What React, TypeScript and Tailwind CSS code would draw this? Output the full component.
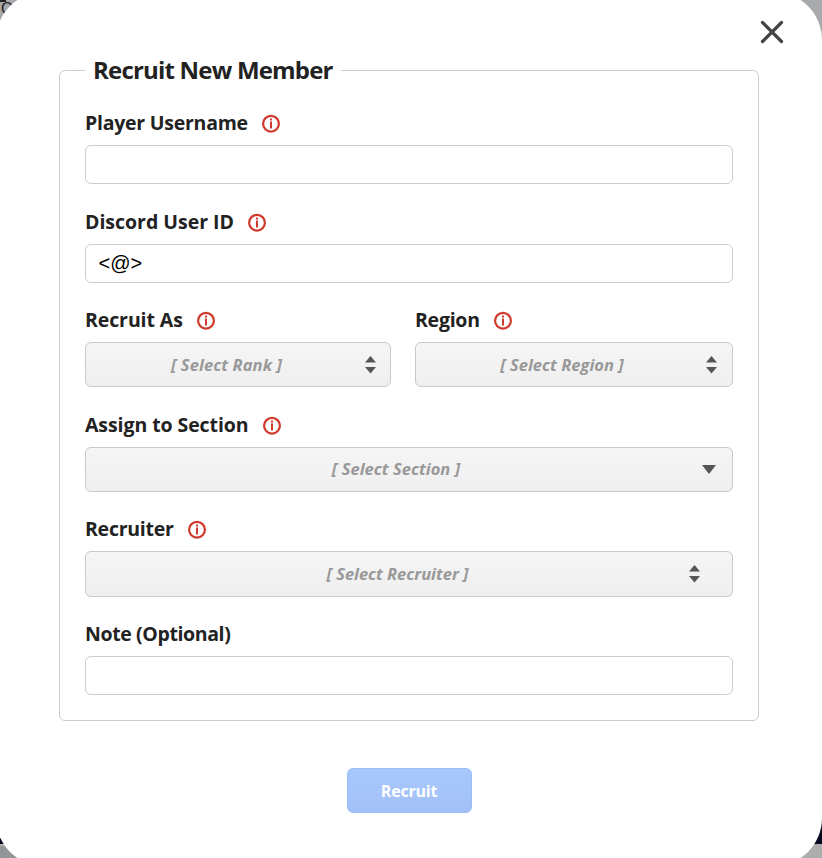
import React from "react";

const labelFont = "font-['Open_Sans',sans-serif] font-bold text-[#222]";

function InfoIcon() {
  return (
    <svg width="20" height="20" viewBox="0 0 20 20" className="ml-[13px] shrink-0" fill="none">
      <circle cx="10" cy="10.7" r="7.9" stroke="#cf3a2c" strokeWidth="2.2" />
      <path d="M10 8.5v7" stroke="#cf3a2c" strokeWidth="2" />
      <path d="M10 5.5v2" stroke="#cf3a2c" strokeWidth="2" />
    </svg>
  );
}

function Label({ text, textClass, required = true }: { text: string; textClass: string; required?: boolean }) {
  return (
    <div className="mb-2 flex h-7 items-center">
      <span className={`${labelFont} whitespace-nowrap text-[19.5px] leading-7 ${textClass}`}>{text}</span>
      {required && <InfoIcon />}
    </div>
  );
}

function TextBox({ value = "" }: { value?: string }) {
  return (
    <input
      readOnly
      value={value}
      className="block h-[39px] w-full rounded-md border border-[#ccc] bg-white px-[12.5px] font-['Liberation_Sans',Arial,sans-serif] text-[20px] text-black outline-none"
    />
  );
}

function SortArrows() {
  return (
    <svg width="12" height="18" viewBox="0 0 12 18" className="shrink-0" fill="#555">
      <path d="M5.5 0 11 6.5H0Z" />
      <path d="M0 11H11L5.5 17.5Z" />
    </svg>
  );
}

function DownArrow() {
  return (
    <svg width="14" height="9" viewBox="0 0 14 9" className="shrink-0" fill="#555">
      <path d="M0 0H14L7 9Z" />
    </svg>
  );
}

function SelectBox({ text, box, textClass, single = false }: { text: string; box: string; textClass: string; single?: boolean }) {
  return (
    <div className={`flex items-center rounded-md border border-[#c9c9c9] bg-linear-to-b from-[#f5f5f5] to-[#efefef] ${box}`}>
      <span className={`flex-1 whitespace-nowrap text-center font-['Open_Sans',sans-serif] text-[16.5px] font-bold italic leading-6 text-[#999] ${textClass}`}>
        {text}
      </span>
      {single ? <DownArrow /> : <SortArrows />}
    </div>
  );
}

export default function App() {
  return (
    <div className="relative h-[858px] w-[822px] overflow-hidden">
      <div className="flex h-full flex-col bg-[#a8a9ab]">
        <div className="h-[2px] w-[6px] bg-[#20222c]" />
        <div className="h-[18px] pl-px font-['Liberation_Sans',sans-serif] text-[16px] leading-[14px] text-[#222]">C</div>
        <div className="flex-1" />
        <div className="h-[44px] bg-[#080b20]" />
        <div className="flex h-[14px]">
          <div className="flex-1 border-t-2 border-[#b2b2b2] bg-[#949597]" />
          <div className="flex-1 bg-[#adadad]" />
        </div>
      </div>

      <div className="absolute -left-1 -top-2 flex h-[874px] w-[826px] flex-col rounded-[48px] bg-white px-[63px]">
        <div className="-mr-[25px] flex h-[60px] items-end justify-end pb-[8px]">
          <svg width="24" height="24" viewBox="0 0 24 24" fill="none" stroke="#444" strokeWidth="3.2" strokeLinecap="round">
            <path d="M2.5 2.5 21.5 21.5M21.5 2.5 2.5 21.5" />
          </svg>
        </div>

        <fieldset className="w-[700px] rounded-md border border-[#ccc] px-[25px] pb-[25px]">
          <legend className={`${labelFont} h-9 w-[256px] whitespace-nowrap px-2 text-[24px] leading-[35px] tracking-[-0.8px]`}>Recruit New Member</legend>
          <div className="mt-[21px]">
            <Label text="Player Username" textClass="tracking-[-0.25px]" />
            <TextBox />
          </div>
          <div className="mt-6">
            <Label text="Discord User ID" textClass="tracking-[-0.02px]" />
            <TextBox value="<@>" />
          </div>
          <div className="mt-[23px] flex gap-6">
            <div className="w-[306px]">
              <Label text="Recruit As" textClass="tracking-[-0.1px]" />
              <SelectBox text="[ Select Rank ]" box="h-[45px] pl-[2px] pr-[13px]" textClass="tracking-[0.1px]" />
            </div>
            <div className="flex-1">
              <Label text="Region" textClass="tracking-[-0.25px]" />
              <SelectBox text="[ Select Region ]" box="h-[45px] pl-[2px] pr-[14px]" textClass="tracking-[0.03px]" />
            </div>
          </div>
          <div className="mt-6">
            <Label text="Assign to Section" textClass="tracking-[-0.08px]" />
            <SelectBox single text="[ Select Section ]" box="h-[45px] pb-px pl-[4px] pr-[16px]" textClass="tracking-[0.03px]" />
          </div>
          <div className="mt-[23px]">
            <Label text="Recruiter" textClass="tracking-[-0.25px]" />
            <SelectBox text="[ Select Recruiter ]" box="h-[46px] pl-[20px] pr-[31px]" textClass="tracking-[-0.02px]" />
          </div>
          <div className="mt-[23px]">
            <Label required={false} text="Note (Optional)" textClass="tracking-[-0.38px]" />
            <TextBox />
          </div>
        </fieldset>

        <button className="mt-[47px] h-[45px] w-[125px] self-center rounded-md border border-[#99bdf6] bg-linear-to-b from-[#a7c8fd] to-[#a3c0f6] font-['Open_Sans',sans-serif] text-[16px] font-bold tracking-[-0.2px] text-white">
          Recruit
        </button>
      </div>
    </div>
  );
}
